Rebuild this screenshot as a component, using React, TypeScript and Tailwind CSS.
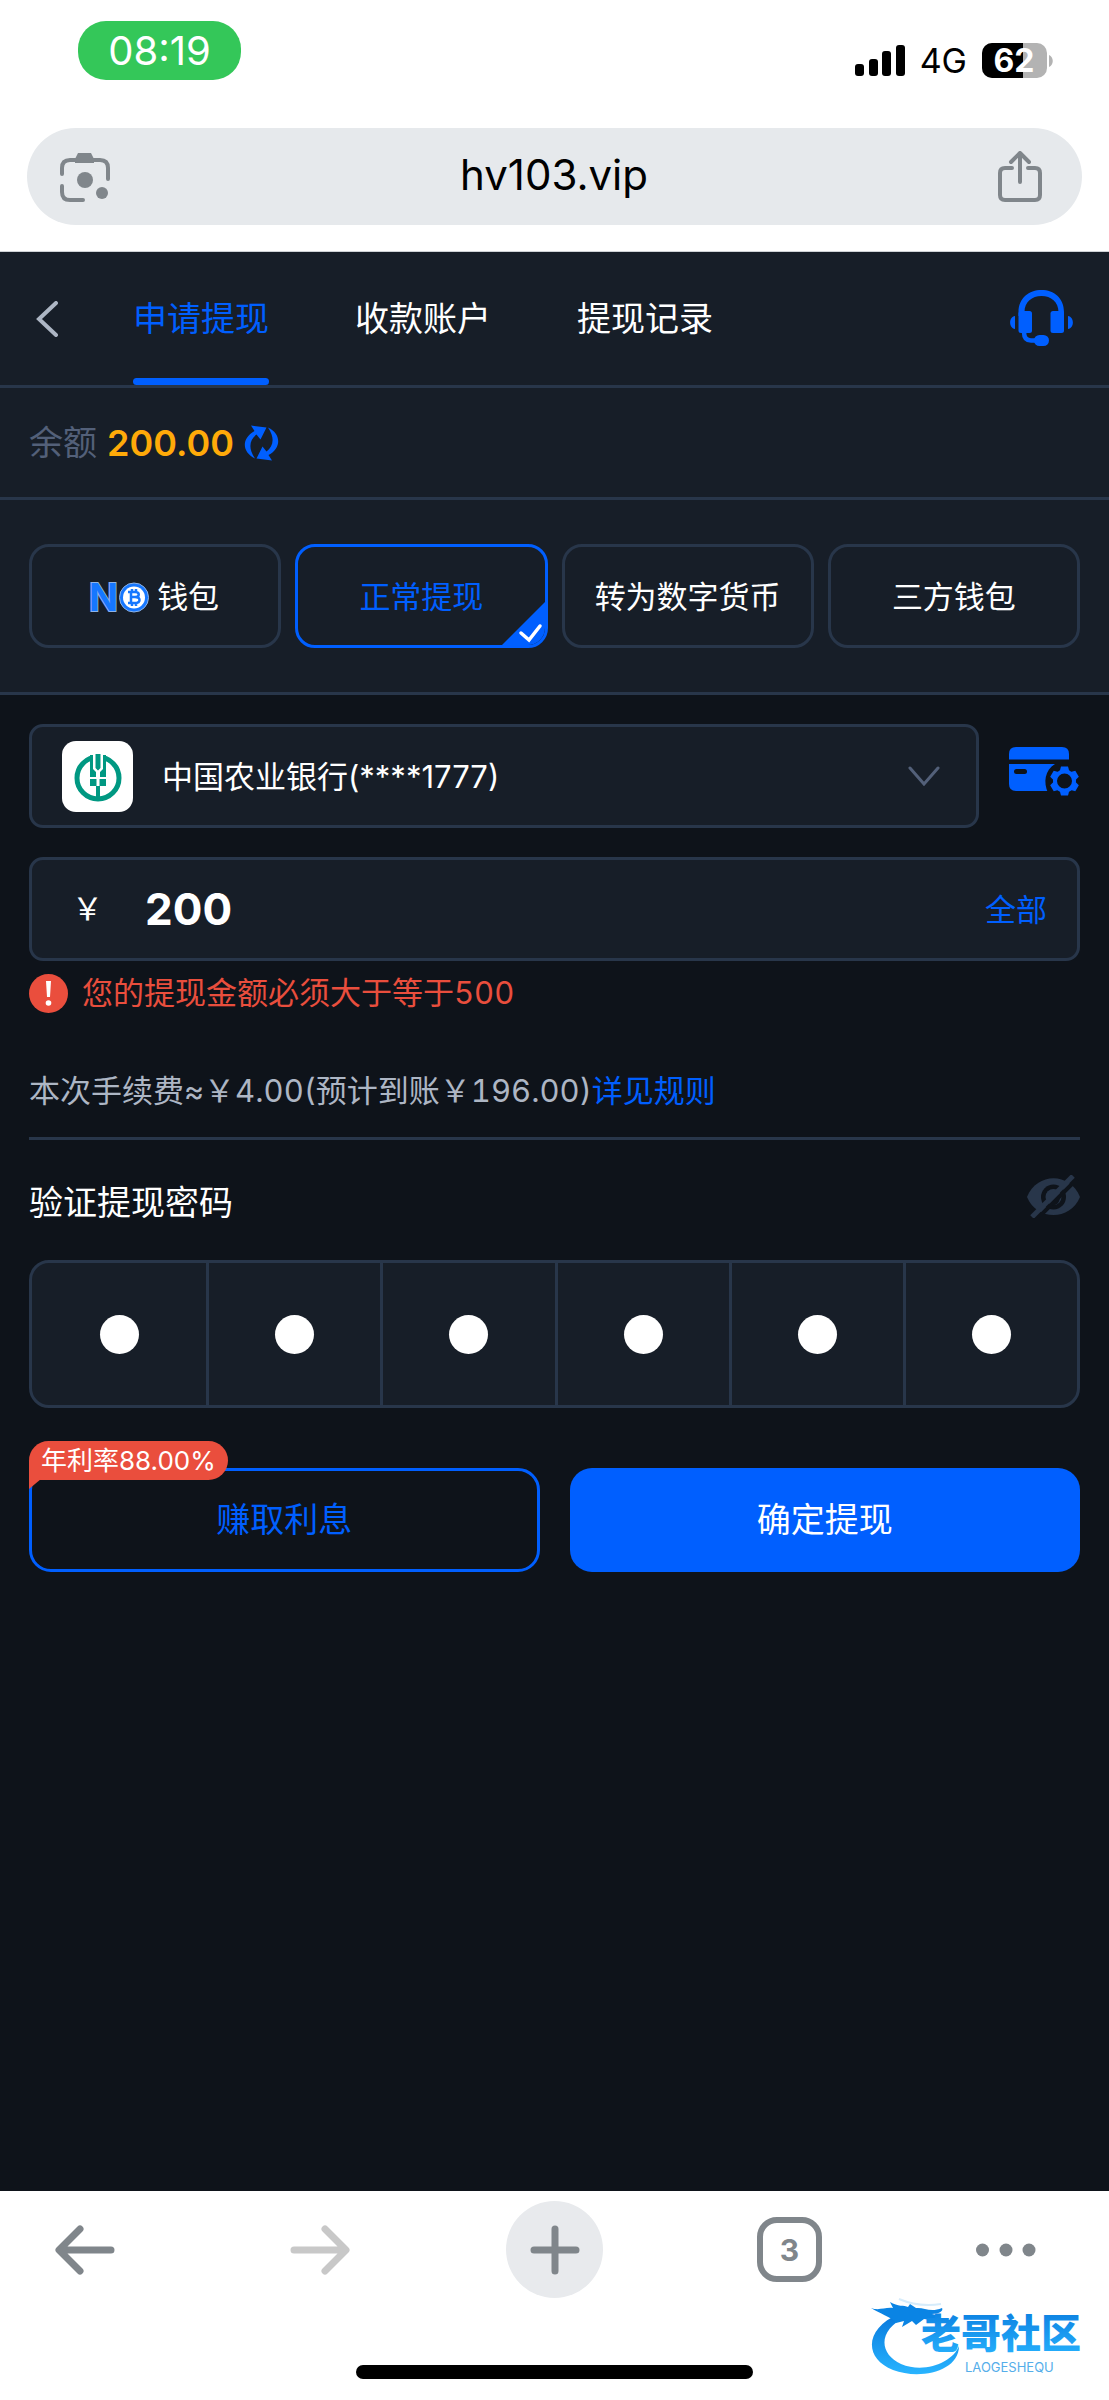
import { useState } from 'react';

const tabs = ['申请提现', '收款账户', '提现记录'];
const methods = ['钱包', '正常提现', '转为数字货币', '三方钱包'];

function SignalIcon() {
  return (
    <svg width="50" height="32" viewBox="0 0 50 32" fill="#000">
      <rect x="0" y="19" width="9" height="12" rx="3" />
      <rect x="14" y="14" width="9" height="17" rx="3" />
      <rect x="27" y="6" width="9" height="25" rx="3" />
      <rect x="41" y="0" width="9" height="31" rx="3" />
    </svg>
  );
}

function BatteryIcon() {
  return (
    <svg width="72" height="36" viewBox="0 0 72 36" className="overflow-visible">
      <clipPath id="battery">
        <rect width="65" height="35" rx="10" />
      </clipPath>
      <g clipPath="url(#battery)">
        <rect width="65" height="35" fill="#b3b3b3" />
        <rect width="41" height="35" fill="#000" />
      </g>
      <path d="M67 12c5 2 5 10 0 12z" fill="#b3b3b3" />
      <text x="32" y="29" textAnchor="middle" fill="#fff" className="font-[Inter] text-[32px] font-bold">62</text>
    </svg>
  );
}

function LensIcon() {
  return (
    <svg width="50" height="50" viewBox="0 0 50 50" fill="none" stroke="#80868b" strokeWidth="4" strokeLinecap="round">
      <path d="M2 22v-6q0-8 8-8h30q8 0 8 8v11M2 34v6q0 8 8 8h13" />
      <path d="M15 7l3-6h13l3 6v4H15z" fill="#80868b" stroke="none" />
      <circle cx="25" cy="28" r="8" fill="#80868b" stroke="none" />
      <circle cx="42" cy="41" r="6" fill="#80868b" stroke="none" />
    </svg>
  );
}

function ShareIcon() {
  return (
    <svg width="44" height="52" viewBox="0 0 44 52" fill="none" stroke="#80868b" strokeWidth="4" strokeLinecap="round" strokeLinejoin="round">
      <path d="M14 17H7q-5 0-5 5v22q0 5 5 5h30q5 0 5-5V22q0-5-5-5h-7M22 31V3M13 11l9-9 9 9" />
    </svg>
  );
}

function HeadsetIcon() {
  return (
    <svg width="63" height="57" viewBox="0 0 63 57" fill="#005fff">
      <path d="M8.500 24V22C8.500 8 19 0 31.500 0S54 8 54 22v4h-5.500v-4C48.500 12 41 6 31.500 6S14.500 12 14.500 22v4h-6z" />
      <rect x="8.500" y="21" width="13.500" height="22" rx="2.500" />
      <rect x="40.500" y="21" width="13.500" height="22" rx="2.500" />
      <path d="M5 26v13c-6.500-1-6.500-12 0-13zM58 26v13c6.500-1 6.500-12 0-13z" />
      <path d="M14 42c0 6 3 8.500 7 8.500h6" fill="none" stroke="#005fff" strokeWidth="4.500" />
      <rect x="24" y="45" width="15" height="11" rx="5.500" />
    </svg>
  );
}

function RefreshIcon() {
  return (
    <svg width="35" height="36" viewBox="0 0 35 35" fill="#005fff">
      <path d="M7 0L22.500 2L16.500 14L12.500 9C6 14 3.500 22 11 33C-2 27-3 13 10.500 5.500z" />
      <path d="M7 0L22.500 2L16.500 14L12.500 9C6 14 3.500 22 11 33C-2 27-3 13 10.500 5.500z" transform="rotate(180 17.5 17.5)" />
    </svg>
  );
}

function NoLogo() {
  return (
    <svg width="58" height="31" viewBox="0 0 58 31" className="overflow-visible">
      <text x="-2" y="29" fill="#1677ff" stroke="#8fb4e6" strokeWidth="2" paintOrder="stroke" className="font-[Inter] text-[38px] font-bold">N</text>
      <circle cx="43" cy="15.500" r="14.500" fill="#1677ff" stroke="#8fb4e6" />
      <circle cx="43" cy="15.500" r="11" fill="#fff" />
      <path d="M40 10v11M37 10h7c5 0 5 5 0 5h-4M44 15c6 0 6 6 0 6h-7M41 7v3M45 7v3M41 21v3M45 21v3" fill="none" stroke="#1677ff" strokeWidth="2.500" />
    </svg>
  );
}

function BankLogo() {
  return (
    <svg width="71" height="71" viewBox="0 0 71 71" className="shrink-0 rounded-[14px] bg-white" fill="#009882">
      <circle cx="36" cy="37" r="21" fill="none" stroke="#009882" strokeWidth="5" />
      <path d="M30 10h12v26H30z" fill="#fff" />
      <path d="M28 14h3v14l3 3v5h-6zM44 14h-3v14l-3 3v5h6zM33.500 13H38.500V27L36 29.500L33.500 27z" />
      <path d="M28 38h6.500v7H28zM37.500 38H44v7h-6.500zM34 45h4v14h-4z" />
    </svg>
  );
}

function CardSettingsIcon() {
  return (
    <svg width="70" height="50" viewBox="0 0 70 50" fill="#005fff">
      <path d="M0 12.500V7q0-7 7-7h46q7 0 7 7v5.500zM0 17h60v27H7q-7 0-7-7z" />
      <rect x="5" y="22" width="13" height="5" rx="2.500" fill="#0e131a" />
      <path d="M70 17H46C36 23 34 35 39 46h31z" fill="#0e131a" />
      <g transform="translate(55.5 34)">
        {[0, 60, 120, 180, 240, 300].map((angle) => (
          <path key={angle} d="M-5-9l1.500-5.500h7L5-9z" transform={`rotate(${angle})`} />
        ))}
        <circle r="9.500" fill="none" stroke="#005fff" strokeWidth="4" />
      </g>
    </svg>
  );
}

function EyeOffIcon() {
  return (
    <svg width="53" height="43" viewBox="0 0 53 43">
      <path d="M0 22C10-3 43-3 53 22C43 46 10 46 0 22z" fill="#28364a" />
      <circle cx="26.500" cy="22" r="12.500" fill="#0e131a" />
      <circle cx="26.500" cy="22" r="8" fill="#28364a" />
      <path d="M23 29c7 1 9-2 9-9" fill="none" stroke="#0e131a" strokeWidth="2" />
      <path d="M9 45L50 4" stroke="#0e131a" strokeWidth="4" />
      <path d="M5 42L46 1" stroke="#28364a" strokeWidth="5" />
    </svg>
  );
}

function CommunityLogo() {
  return (
    <svg width="222" height="82" viewBox="0 0 222 82">
      <defs>
        <linearGradient id="sea" x1="0" y1="0" x2="0" y2="1">
          <stop offset="0" stopColor="#0878dc" />
          <stop offset="1" stopColor="#28b4ff" />
        </linearGradient>
      </defs>
      <path d="M28 18C-6 32-8 62 22 74C48 84 88 76 88 50C82 66 54 78 30 68C8 58 6 34 36 20z" fill="url(#sea)" />
      <path d="M0 12c8 3 14-1 22 0l-3-6c8 5 14 3 18 5l2-3 6 4c8-1 14 5 26 0c2 3-4 6-10 6l8 2-2 5-14-2-8 6-4-4-10 6 2-6-8 2c-4-6-18-10-25-15z" fill="#0a84e4" />
      <path d="M28 3c14 6 28 7 42 5" fill="none" stroke="#d6ecfb" strokeWidth="2" />
      <text x="50" y="52" fill="url(#sea)" className="font-['Noto_Sans_CJK_SC'] text-[40px] font-black">老哥社区</text>
      <text x="94" y="76" fill="#55aeea" className="font-[Inter] text-[13px]">LAOGESHEQU</text>
    </svg>
  );
}

export default function App() {
  const [tab, setTab] = useState(0);
  const [method, setMethod] = useState(1);
  const [amount, setAmount] = useState('200');
  const [pin, setPin] = useState(['1', '2', '3', '4', '5', '6']);

  return (
    <div className="flex min-h-screen flex-col bg-white font-[Inter,'Noto_Sans_CJK_SC',sans-serif] text-[31px] leading-[44px]">
      <header className="border-b border-[#cfd2d6] px-[27px] pb-[26px]">
        <div className="flex h-32 items-start justify-between pr-7 pl-[51px]">
          <span className="mt-[21px] flex h-[59px] w-[163px] items-center justify-center rounded-[28px] bg-[#34c759] text-[40px] text-white">08:19</span>
          <div className="mt-[43px] flex h-9 items-center gap-[15px]">
            <SignalIcon />
            <span className="text-[34px] leading-9 text-black">4G</span>
            <BatteryIcon />
          </div>
        </div>
        <div className="flex h-[97px] items-center justify-between rounded-full bg-[#e6e9ec] pr-10 pl-[33px]">
          <button type="button" aria-label="Lens"><LensIcon /></button>
          <span className="pb-1 text-[42px] text-black">hv103.vip</span>
          <button type="button" aria-label="Share"><ShareIcon /></button>
        </div>
      </header>

      <main className="flex-1 bg-[#0e131a] text-white">
        <div className="bg-[#171e28]">
          <div className="flex h-[136px] items-center border-b-3 border-[#28364a] pr-9">
            <button type="button" aria-label="返回" className="w-[133px] pl-9">
              <svg width="22" height="36" viewBox="0 0 22 36" fill="none" stroke="#adb6c4" strokeWidth="4" strokeLinecap="round">
                <path d="M20 2L3 18l17 16" />
              </svg>
            </button>
            <nav className="flex h-full gap-[86px]">
              {tabs.map((name, i) => (
                <button
                  key={name}
                  type="button"
                  onClick={() => setTab(i)}
                  className={`flex h-full flex-col items-stretch justify-between text-[34px] ${tab === i ? 'text-[#005fff]' : 'text-white'}`}
                >
                  <span className="pt-[45px]">{name}</span>
                  {tab === i && <span className="h-[7px] rounded-full bg-[#005fff]" />}
                </button>
              ))}
            </nav>
            <button type="button" aria-label="客服" className="ml-auto"><HeadsetIcon /></button>
          </div>

          <div className="flex h-28 items-center border-b-3 border-[#28364a] px-[29px] text-[34px]">
            <span className="text-[#536079]">余额</span>
            <span className="ml-[10px] text-[36px] font-semibold text-[#ffaa09]">200.00</span>
            <button type="button" aria-label="刷新余额" className="ml-[10px]"><RefreshIcon /></button>
          </div>

          <div className="grid grid-cols-4 gap-[14px] border-b-3 border-[#28364a] px-[29px] py-11">
            {methods.map((name, i) => (
              <button
                key={name}
                type="button"
                aria-pressed={method === i}
                onClick={() => setMethod(i)}
                className={`relative flex h-[104px] items-center justify-center gap-2 overflow-hidden rounded-[20px] border-3 pt-[2px] ${
                  method === i ? 'border-[#005fff] text-[#005fff]' : 'border-[#28364a] text-white'
                }`}
              >
                {i === 0 && <NoLogo />}
                {name}
                {method === i && (
                  <svg width="43" height="43" viewBox="0 0 43 43" className="absolute right-0 bottom-0">
                    <path d="M43 0v43H0z" fill="#005fff" />
                    <path d="M19 31l8 7 11-14" fill="none" stroke="#fff" strokeWidth="3.500" strokeLinecap="round" />
                  </svg>
                )}
              </button>
            ))}
          </div>
        </div>

        <div className="px-[29px] pt-[29px]">
          <div className="flex gap-[30px]">
            <div className="flex h-[104px] flex-1 items-center rounded-[14px] border-3 border-[#28364a] bg-[#171e28] pr-9 pl-[30px]">
              <BankLogo />
              <select aria-label="收款银行卡" className="ml-[29px] h-full flex-1 appearance-none bg-transparent pt-[2px] outline-none">
                <option>中国农业银行(****1777)</option>
              </select>
              <svg width="32" height="20" viewBox="0 0 32 20" fill="none" stroke="#536079" strokeWidth="3" strokeLinecap="round">
                <path d="M2 2l14 16L30 2" />
              </svg>
            </div>
            <button type="button" aria-label="管理银行卡" className="flex w-[71px] pt-[23px]"><CardSettingsIcon /></button>
          </div>

          <div className="mt-[29px] flex h-[104px] items-center rounded-[14px] border-3 border-[#28364a] bg-[#171e28] pr-[30px] pl-10">
            <label htmlFor="amount" className="w-[73px]">￥</label>
            <input
              id="amount"
              value={amount}
              onChange={(e) => setAmount(e.target.value)}
              className="min-w-0 flex-1 bg-transparent text-[44px] font-bold outline-none"
            />
            <button type="button" className="pt-[2px] text-[#005fff]">全部</button>
          </div>

          <p className="mt-[10px] flex items-center gap-[14px] tabular-nums text-[#e94e3d]">
            <svg width="39" height="39" viewBox="0 0 39 39">
              <circle cx="19.500" cy="19.500" r="19.500" fill="#ea4e3d" />
              <path d="M17 7h5l-1 16h-3z" fill="#fff" />
              <circle cx="19.500" cy="29" r="2.800" fill="#fff" />
            </svg>
            您的提现金额必须大于等于500
          </p>

          <p className="mt-[54px] border-b-3 border-[#28364a] pb-6 tabular-nums text-[#adb6c4]">
            本次手续费≈￥4.00(预计到账￥196.00)<a href="#rules" className="text-[#005fff]">详见规则</a>
          </p>

          <div className="mt-[35px] flex items-start justify-between">
            <h2 className="pt-[6px] text-[34px]">验证提现密码</h2>
            <button type="button" aria-label="显示密码"><EyeOffIcon /></button>
          </div>

          <div className="mt-[35px] grid h-[148px] grid-cols-6 overflow-hidden rounded-[20px] border-3 border-[#28364a] bg-[#171e28]">
            {pin.map((digit, i) => (
              <label key={i} className="relative flex items-center justify-center border-l-3 border-[#28364a] first:border-l-0">
                <input
                  type="password"
                  aria-label={`密码第${i + 1}位`}
                  maxLength={1}
                  value={digit}
                  onChange={(e) => setPin(pin.map((d, n) => (n === i ? e.target.value : d)))}
                  className="sr-only"
                />
                {digit && <span className="size-[39px] rounded-full bg-white" />}
              </label>
            ))}
          </div>

          <div className="mt-[60px] grid grid-cols-2 gap-[30px] text-[34px]">
            <button type="button" className="relative h-[104px] rounded-[22px] border-3 border-[#005fff] text-[#005fff]">
              <span className="absolute -top-[30px] -left-[3px] flex h-[39px] items-center rounded-t-[20px] rounded-br-[20px] bg-[#ea4e3d] px-3 text-[26px] text-white">
                年利率88.00%
                <svg width="12" height="10" viewBox="0 0 12 10" className="absolute top-full left-0 -mt-px">
                  <path d="M0 0h12L0 10z" fill="#ea4e3d" />
                </svg>
              </span>
              赚取利息
            </button>
            <button type="button" className="h-[104px] rounded-[22px] bg-[#005fff]">确定提现</button>
          </div>
        </div>
      </main>

      <footer className="relative h-[209px] px-9 pt-[10px] text-[#80868b]">
        <div className="flex justify-between">
          <button type="button" aria-label="后退" className="flex size-[97px] items-center justify-center">
            <svg width="60" height="50" viewBox="0 0 60 50" fill="none" stroke="currentColor" strokeWidth="7" strokeLinecap="round" strokeLinejoin="round">
              <path d="M25 4L4 25l21 21M5 25h51" />
            </svg>
          </button>
          <button type="button" aria-label="前进" className="flex size-[97px] items-center justify-center text-[#c8c8c8]">
            <svg width="60" height="50" viewBox="0 0 60 50" fill="none" stroke="currentColor" strokeWidth="7" strokeLinecap="round" strokeLinejoin="round">
              <path d="M35 4l21 21-21 21M55 25H4" />
            </svg>
          </button>
          <button type="button" aria-label="新标签页" className="flex size-[97px] items-center justify-center rounded-full bg-[#e8eaed]">
            <svg width="50" height="50" viewBox="0 0 50 50" stroke="currentColor" strokeWidth="7" strokeLinecap="round">
              <path d="M25 4v42M4 25h42" />
            </svg>
          </button>
          <button type="button" aria-label="标签页" className="flex size-[97px] items-center justify-center">
            <span className="flex size-[65px] items-center justify-center rounded-[20px] border-6 border-current text-[30px] font-bold">3</span>
          </button>
          <button type="button" aria-label="更多" className="flex size-[97px] items-center">
            <svg width="60" height="14" viewBox="0 0 60 14" fill="currentColor">
              <circle cx="6.500" cy="7" r="6.500" />
              <circle cx="30" cy="7" r="6.500" />
              <circle cx="53" cy="7" r="6.500" />
            </svg>
          </button>
        </div>
        <div className="mx-auto mt-[67px] h-[14px] w-[397px] rounded-full bg-black" />
        <div className="absolute right-4 bottom-[22px]"><CommunityLogo /></div>
      </footer>
    </div>
  );
}
